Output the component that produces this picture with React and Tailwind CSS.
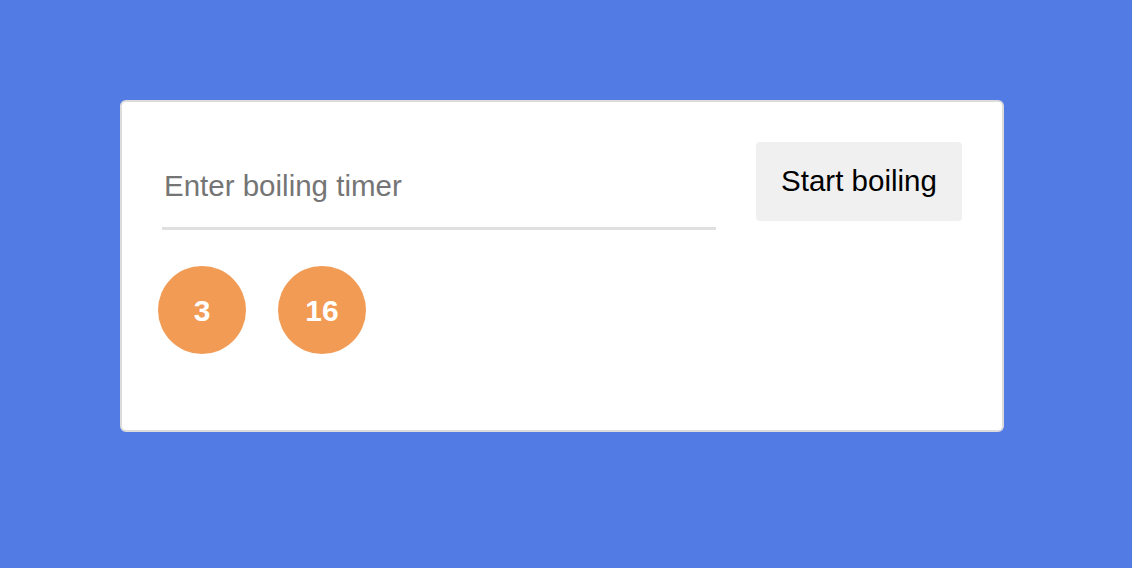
import React from 'react';

const App = () => {
  const timers = [3, 16];

  return (
    <div
      className="w-full h-[568px] bg-[#527be3] pt-[100px] pl-[120px]"
      style={{ fontFamily: '"Liberation Sans", Arial, sans-serif' }}
    >
      <div className="w-[884px] h-[332px] bg-white border-2 border-[#dcdcdc] rounded-[6px] px-[40px] pt-[40px]">
        {/* Input row */}
        <div className="flex items-start gap-[40px]">
          <input
            type="text"
            placeholder="Enter boiling timer"
            className="w-[554px] h-[88px] pt-[3px] pl-[2px] text-[29.5px] text-black placeholder:text-[#757575] border-b-[3px] border-[#e0e0e0] outline-none bg-transparent"
          />
          <button className="w-[206px] h-[79px] bg-[#f0f0f0] rounded-[4px] text-[29.5px] text-black">
            Start boiling
          </button>
        </div>

        {/* Timers */}
        <div className="flex gap-[32px] mt-[36px] -ml-[4px]">
          {timers.map(t => (
            <div
              key={t}
              className="w-[88px] h-[88px] rounded-full bg-[#f29b55] flex items-center justify-center text-white font-bold text-[30px]"
            >
              {t}
            </div>
          ))}
        </div>
      </div>
    </div>
  );
};

export default App;
